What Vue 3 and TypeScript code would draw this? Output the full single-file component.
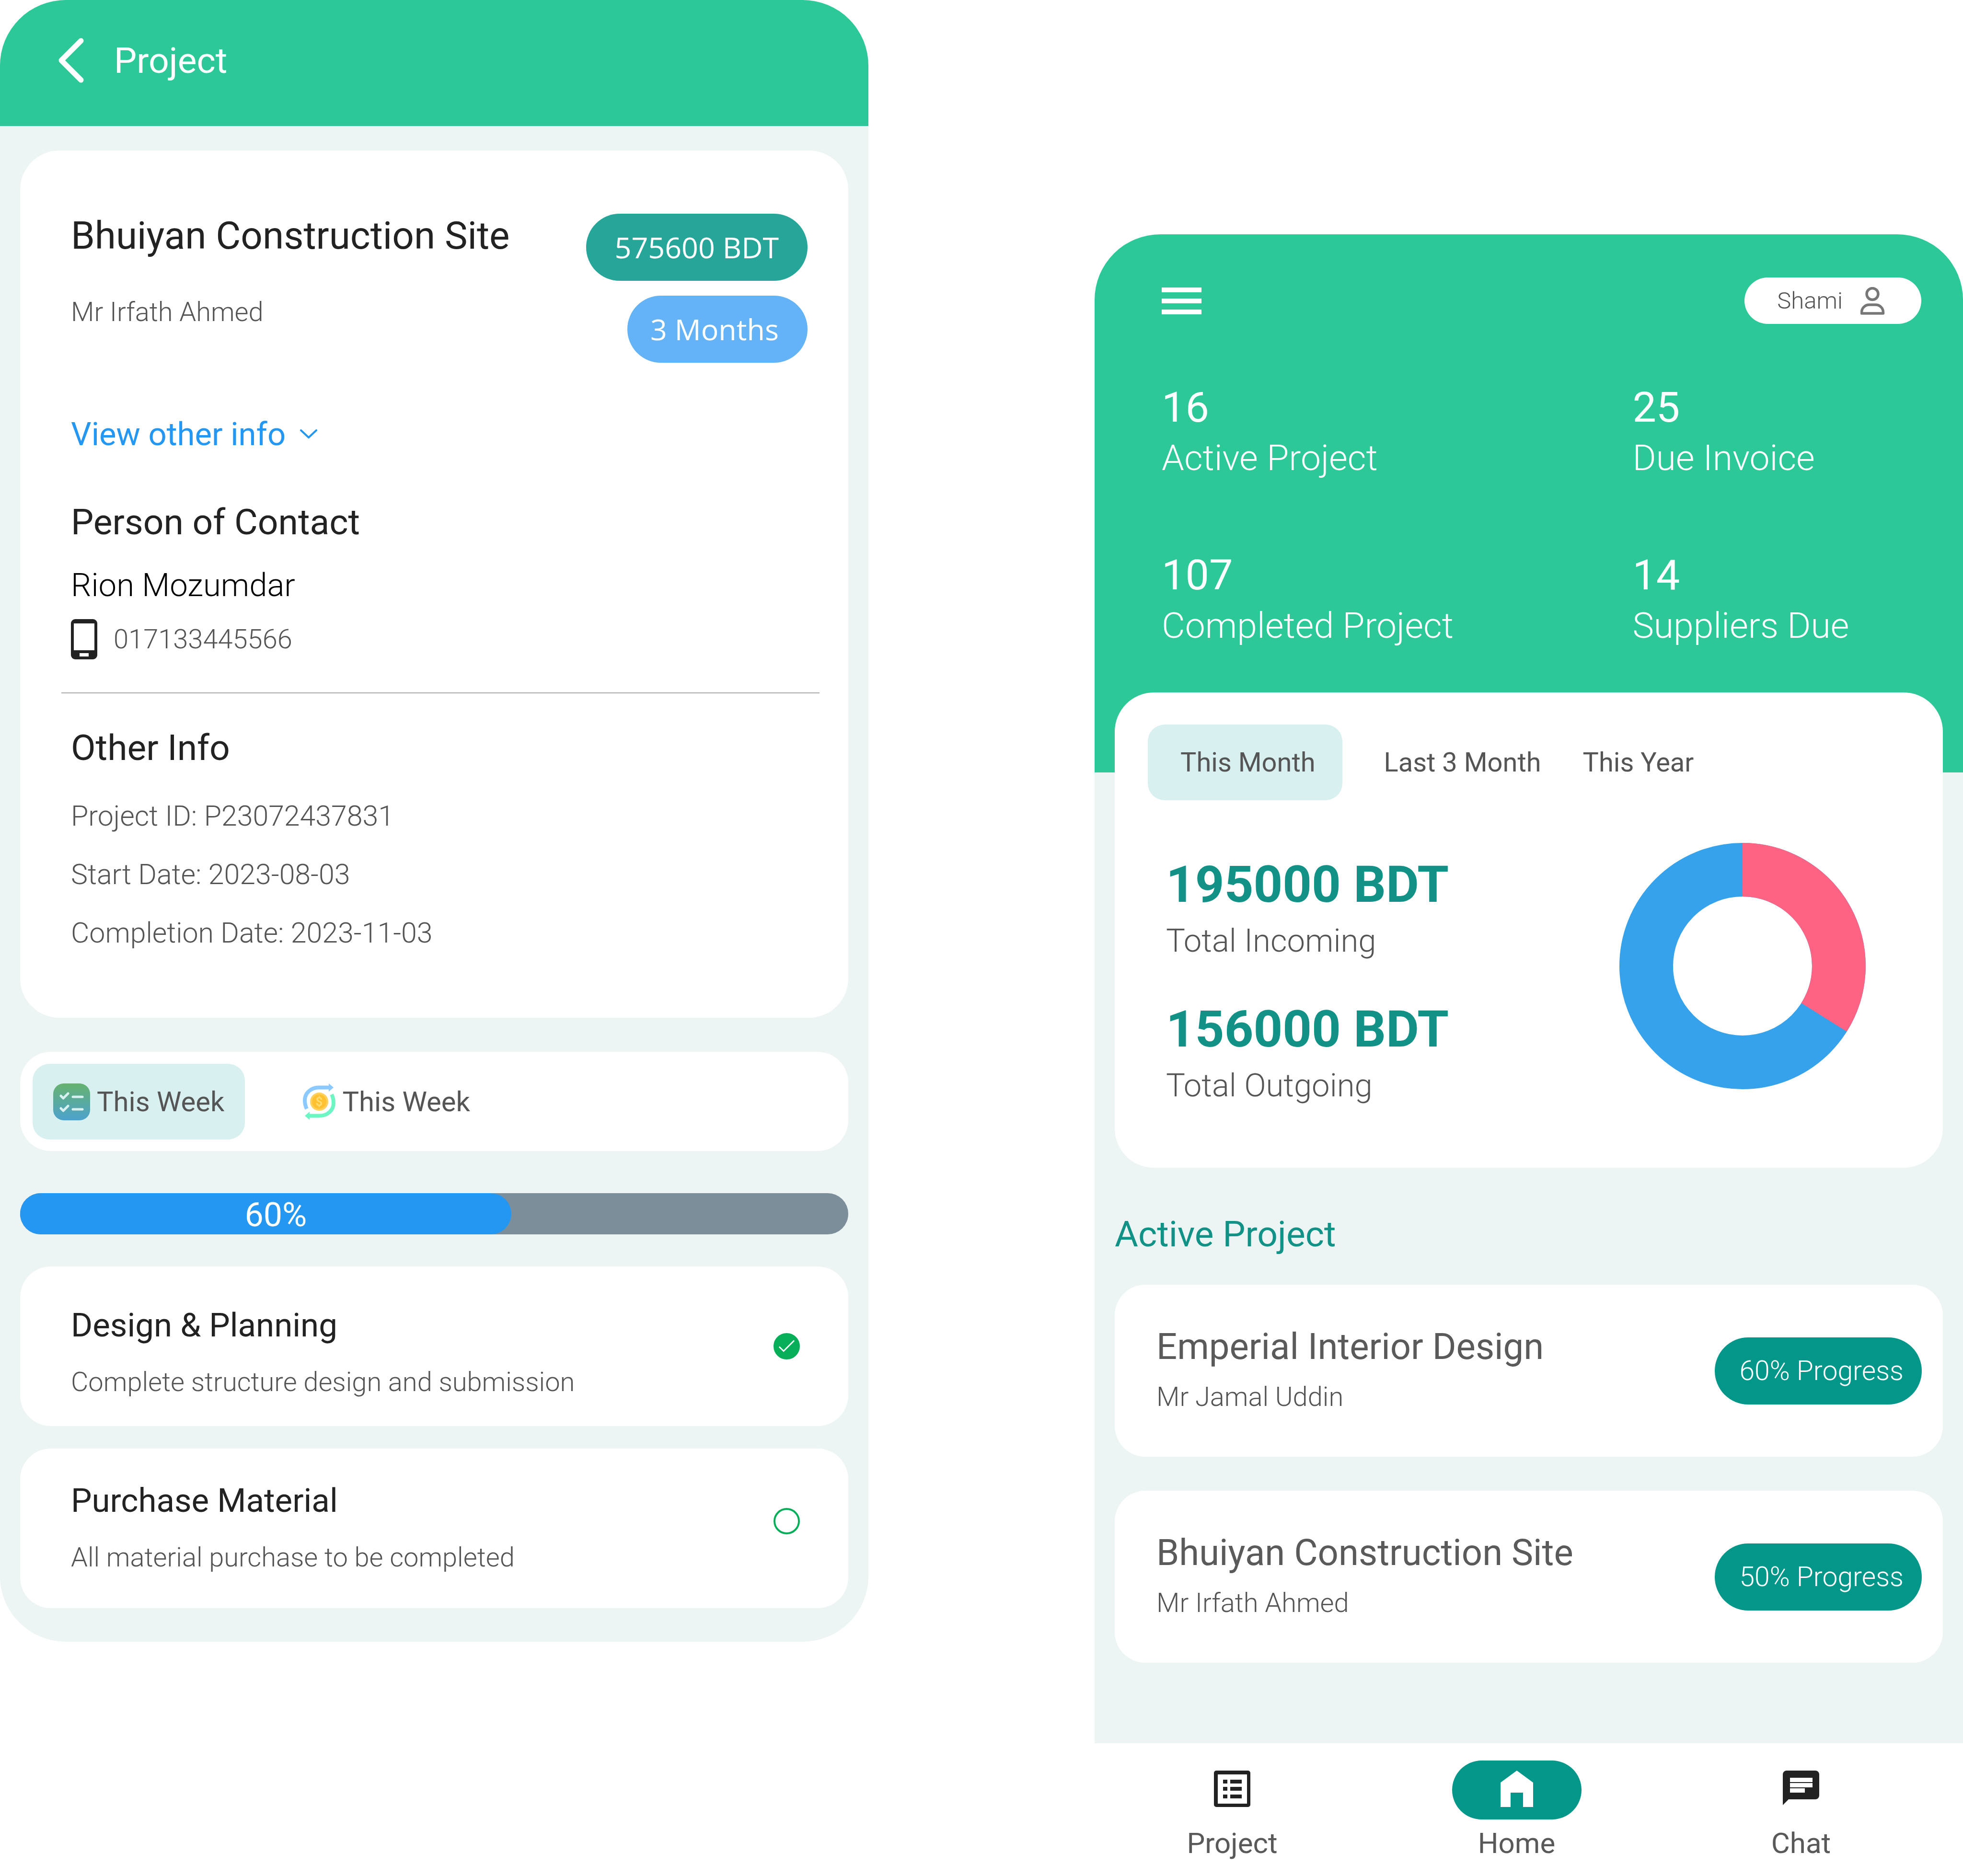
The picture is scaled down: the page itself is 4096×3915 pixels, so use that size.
<script setup lang="ts">
import { ref } from 'vue'

interface Task {
  title: string
  detail: string
  done: boolean
}

interface Project {
  name: string
  client: string
  progress: number
}

const info = ['Project ID: P23072437831', 'Start Date: 2023-08-03', 'Completion Date: 2023-11-03']

const tasks = ref<Task[]>([
  { title: 'Design & Planning', detail: 'Complete structure design and submission', done: true },
  { title: 'Purchase Material', detail: 'All material purchase to be completed', done: false },
])

const stats = [
  { value: 16, label: 'Active Project' },
  { value: 25, label: 'Due Invoice' },
  { value: 107, label: 'Completed Project' },
  { value: 14, label: 'Suppliers Due' },
]

const periods = ['This Month', 'Last 3 Month', 'This Year']
const period = ref(0)

const totals = [
  { amount: '195000 BDT', label: 'Total Incoming' },
  { amount: '156000 BDT', label: 'Total Outgoing' },
]

const projects: Project[] = [
  { name: 'Emperial Interior Design', client: 'Mr Jamal Uddin', progress: 60 },
  { name: 'Bhuiyan Construction Site', client: 'Mr Irfath Ahmed', progress: 50 },
]

const progress = { label: '60%', fill: 59.3 }
</script>

<template>
  <main class="board">
    <section class="phone detail">
      <header class="bar">
        <button class="plain back" aria-label="Back">
          <svg width="53" height="94" viewBox="0 0 53 94" fill="none" stroke="#fff" stroke-width="11" stroke-linecap="round" stroke-linejoin="round"><path d="M47 6 6 47l41 41" /></svg>
        </button>
        <h1 class="heading">Project</h1>
      </header>

      <article class="card summary">
        <div class="top">
          <div class="who">
            <h2 class="site">Bhuiyan Construction Site</h2>
            <p class="small">Mr Irfath Ahmed</p>
          </div>
          <div class="pills">
            <span class="pill budget">575600 BDT</span>
            <span class="pill term">3 Months</span>
          </div>
        </div>
        <button class="plain more">
          View other info
          <svg width="36" height="20" viewBox="0 0 36 20" fill="none" stroke="currentColor" stroke-width="4" stroke-linecap="round" stroke-linejoin="round"><path d="m2 2 16 15L34 2" /></svg>
        </button>
        <h3 class="heading contact">Person of Contact</h3>
        <p class="person">Rion Mozumdar</p>
        <a class="tel" href="tel:017133445566">
          <svg width="55" height="84" viewBox="0 0 55 84"><path fill="#222" fill-rule="evenodd" d="M9 0h37a9 9 0 0 1 9 9v66a9 9 0 0 1-9 9H9a9 9 0 0 1-9-9V9a9 9 0 0 1 9-9ZM6 9v56h43V9ZM18 71v7h19v-7Z" /></svg>
          017133445566
        </a>
        <hr />
        <h3 class="heading">Other Info</h3>
        <ul class="info">
          <li v-for="line in info" :key="line">{{ line }}</li>
        </ul>
      </article>

      <nav class="card weeks">
        <button class="tab active">
          <svg width="77" height="77" viewBox="0 0 77 77" fill="none">
            <defs><linearGradient id="leaf" x1="0" y1="0" x2="0" y2="1"><stop offset="0" stop-color="#67b26f" /><stop offset="1" stop-color="#4ca2cd" /></linearGradient></defs>
            <rect width="77" height="77" rx="22" fill="url(#leaf)" />
            <path d="m16 26 5 5 10-10M41 28h20M16 52l5 5 10-10M41 54h20" stroke="#d8f1f0" stroke-width="5" stroke-linecap="round" stroke-linejoin="round" />
          </svg>
          This Week
        </button>
        <button class="tab">
          <svg width="68" height="76" viewBox="0 0 68 76" fill="none">
            <g><path d="M8 53C5 47 4 41 4 35 4 20 17 8.500 33 8.500h22" stroke="#8bc9ff" stroke-width="8" /><path d="m54 0 10 8.500L54 17Z" fill="#8bc9ff" /></g>
            <g transform="rotate(180 34 38)"><path d="M8 53C5 47 4 41 4 35 4 20 17 8.500 33 8.500h22" stroke="#6df5c3" stroke-width="8" /><path d="m54 0 10 8.500L54 17Z" fill="#6df5c3" /></g>
            <circle cx="34" cy="38" r="19" fill="#ffd05b" />
            <circle cx="34" cy="38" r="15" fill="#ffc12f" />
            <text x="34" y="47" text-anchor="middle" font-size="26" font-weight="700" fill="#ffdc70">$</text>
          </svg>
          This Week
        </button>
      </nav>

      <div class="track" role="progressbar" aria-valuenow="60" aria-valuemin="0" aria-valuemax="100" aria-label="Project progress">
        <div class="fill" :style="{ width: progress.fill + '%' }">{{ progress.label }}</div>
      </div>

      <ul class="tasks">
        <li v-for="(task, i) in tasks" :key="task.title" class="card task">
          <div>
            <label :for="'task-' + i" class="task-title">{{ task.title }}</label>
            <p class="small">{{ task.detail }}</p>
          </div>
          <span class="tick">
            <input :id="'task-' + i" v-model="task.done" type="checkbox" />
            <svg v-if="task.done" width="55" height="55" viewBox="0 0 60 60" fill="none" stroke="#fff" stroke-width="3"><path d="m13 31 10 10 24-24" /></svg>
          </span>
        </li>
      </ul>
    </section>

    <section class="phone home">
      <header class="hero">
        <div class="tools">
          <button class="plain" aria-label="Menu">
            <svg width="83" height="56" viewBox="0 0 83 56" fill="#fff"><path d="M0 0h83v10H0zM0 23h83v10H0zM0 46h83v10H0z" /></svg>
          </button>
          <button class="user">
            Shami
            <svg width="51" height="58" viewBox="0 0 51 58" fill="none" stroke="#777" stroke-width="5.500"><circle cx="25" cy="14.500" r="12" /><path stroke-linejoin="round" d="M2.500 55v-2c0-9 7-16 16-16h13c9 0 16 7 16 16v2Z" /></svg>
          </button>
        </div>
        <dl class="stats">
          <div v-for="stat in stats" :key="stat.label" class="stat">
            <dd>{{ stat.value }}</dd>
            <dt>{{ stat.label }}</dt>
          </div>
        </dl>
      </header>

      <article class="card money">
        <div class="periods">
          <button v-for="(name, i) in periods" :key="name" class="tab" :class="{ active: i === period }" @click="period = i">{{ name }}</button>
        </div>
        <div class="flow">
          <dl class="totals">
            <div v-for="total in totals" :key="total.label" class="total">
              <dd>{{ total.amount }}</dd>
              <dt>{{ total.label }}</dt>
            </div>
          </dl>
          <svg class="donut" width="514" height="514" viewBox="-257 -257 514 514" role="img" aria-label="Incoming and outgoing share" fill="none" stroke-width="112">
            <circle r="201" stroke="#36a2eb" />
            <path d="M0-201A201 201 0 0 1 170 107" stroke="#ff6384" />
          </svg>
        </div>
      </article>

      <h2 class="heading active-title">Active Project</h2>
      <ul class="projects">
        <li v-for="project in projects" :key="project.name" class="card project">
          <div>
            <h3 class="heading">{{ project.name }}</h3>
            <p class="small">{{ project.client }}</p>
          </div>
          <span class="badge">{{ project.progress }}% Progress</span>
        </li>
      </ul>

      <nav class="dock">
        <a href="#project">
          <span class="slot"><svg width="76" height="76" viewBox="0 0 76 76" fill="#222"><path fill-rule="evenodd" d="M5 0h66a5 5 0 0 1 5 5v66a5 5 0 0 1-5 5H5a5 5 0 0 1-5-5V5a5 5 0 0 1 5-5Zm3 8v61h61V8Z" /><path d="M19 19h9v8h-9zM34 19h24v8H34zM19 34h9v8h-9zM34 34h24v8H34zM19 50h9v8h-9zM34 50h24v8H34z" /></svg></span>
          Project
        </a>
        <a href="#home">
          <span class="slot current"><svg width="68" height="76" viewBox="0 0 68 76" fill="#fff"><path d="M34 0 68 25v51H47V46H21v30H0V25Z" /></svg></span>
          Home
        </a>
        <a href="#chat">
          <span class="slot"><svg width="76" height="76" viewBox="0 0 76 76" fill="#222"><path fill-rule="evenodd" d="M8 0h60a8 8 0 0 1 8 8v44a8 8 0 0 1-8 8H12L0 72V8a8 8 0 0 1 8-8Zm7 15v9h47v-9Zm0 11v9h47v-9Zm0 11v9h31v-9Z" /></svg></span>
          Chat
        </a>
      </nav>
    </section>
  </main>
</template>

<style>
body {
  margin: 0;
  background: #fff;
}
</style>

<style scoped>
.board {
  display: grid;
  grid-template-columns: 1812fr 472fr 1812fr;
  align-items: start;
  font-family: Roboto, "Liberation Sans", sans-serif;
  font-size: 56px;
  font-weight: 400;
  color: #222;
}

h1, h2, h3, p, ul, dl, dd {
  margin: 0;
  padding: 0;
  font-weight: 400;
}

ul {
  list-style: none;
}

svg {
  display: block;
  flex: none;
}

button {
  border: 0;
  font: inherit;
  cursor: pointer;
}

a {
  color: inherit;
  text-decoration: none;
}

.plain {
  padding: 0;
  background: none;
}

.heading {
  font-size: 75px;
  line-height: 90px;
}

.small {
  font-size: 56px;
  line-height: 70px;
  font-weight: 300;
  color: #555;
}

.card {
  margin: 0 42px;
  background: #fff;
  border-radius: 64px;
}

.phone {
  background: #ecf5f4;
  border-radius: 137px 137px 0 0;
  overflow: hidden;
}

.detail {
  border-radius: 137px;
  padding-bottom: 70px;
}

.bar {
  display: flex;
  align-items: center;
  gap: 63px;
  box-sizing: border-box;
  height: 263px;
  padding: 0 122px 12px;
  background: #2cc897;
  color: #fff;
}

.summary {
  margin-top: 51px;
  padding: 132px 85px 116px 106px;
  border-radius: 82px;
}

.top {
  display: flex;
  justify-content: space-between;
}

.site {
  font-size: 80px;
  line-height: 92px;
  margin-bottom: 78px;
}

.pills {
  display: flex;
  flex-direction: column;
  align-items: flex-end;
  gap: 31px;
}

.pill {
  padding: 0 60px;
  border-radius: 70px;
  font-family: "Open Sans", "Noto Sans", sans-serif;
  font-size: 61px;
  line-height: 140px;
  color: #fff;
}

.budget {
  background: #25a699;
}

.term {
  padding-left: 48px;
  background: #64b3f6;
}

.more {
  display: flex;
  align-items: center;
  gap: 30px;
  margin-top: 109px;
  font-size: 67px;
  line-height: 80px;
  color: #2497f3;
}

.contact {
  margin-top: 98px;
}

.person {
  margin: 47px 0 31px;
  font-size: 67px;
  line-height: 80px;
  font-weight: 300;
  color: #000;
}

.tel {
  display: flex;
  align-items: center;
  gap: 34px;
  line-height: 84px;
  font-weight: 300;
  color: #555;
}

hr {
  height: 2px;
  margin: 69px -25px 68px -20px;
  border: 0;
  background: #aaa;
}

.info {
  margin-top: 37px;
  font-size: 59px;
  line-height: 122px;
  font-weight: 300;
  color: #555;
}

.weeks {
  display: flex;
  gap: 78px;
  margin-top: 71px;
  padding: 25px 26px 24px;
}

.tab {
  display: flex;
  align-items: center;
  gap: 14px;
  height: 158px;
  padding: 0 43px;
  border-radius: 35px;
  background: none;
  color: #555;
}

.weeks .tab {
  font-size: 58px;
}

.tab.active {
  background: #d8f1f0;
}

.track {
  margin: 88px 42px 67px;
  border-radius: 43px;
  background: #7d8e9b;
}

.fill {
  box-sizing: border-box;
  height: 86px;
  padding: 2px 0 0 42px;
  border-radius: 43px;
  background: #2497f3;
  color: #fff;
  font-size: 70px;
  line-height: 86px;
  text-align: center;
}

.tasks {
  display: grid;
  gap: 47px;
}

.task {
  display: flex;
  justify-content: space-between;
  padding: 83px 101px 57px 106px;
}

.task:last-child {
  padding-top: 69px;
  padding-bottom: 71px;
}

.task-title {
  display: block;
  margin-bottom: 43px;
  font-size: 69px;
  line-height: 80px;
}

.tick {
  display: grid;
  align-self: start;
  margin-top: 56px;
}

.task:last-child .tick {
  margin-top: 55px;
}

.tick > * {
  grid-area: 1 / 1;
}

.tick svg {
  z-index: 1;
  pointer-events: none;
}

.tick input {
  appearance: none;
  box-sizing: border-box;
  width: 55px;
  height: 55px;
  margin: 0;
  border: 4px solid #07ae59;
  border-radius: 50%;
}

.tick input:checked {
  background: #07ae59;
}

.home {
  grid-column: 3;
  margin-top: 489px;
}

.hero {
  padding: 90px 87px 262px 140px;
  background: #2cc897;
  color: #fff;
}

.tools {
  display: flex;
  justify-content: space-between;
  align-items: center;
}

.user {
  display: flex;
  align-items: center;
  gap: 37px;
  height: 97px;
  padding: 0 76px 0 68px;
  border-radius: 49px;
  background: #fff;
  color: #555;
  font-size: 49px;
  font-weight: 300;
}

.stats {
  display: grid;
  grid-template-columns: 983fr 603fr;
  row-gap: 150px;
  margin-top: 124px;
}

.stat dd {
  margin-bottom: 10px;
  font-size: 88px;
  line-height: 100px;
}

.stat dt {
  font-size: 75px;
  line-height: 90px;
  font-weight: 300;
}

.money {
  position: relative;
  margin-top: -167px;
  padding: 67px 69px 132px;
  border-radius: 82px;
}

.periods {
  display: flex;
  gap: 87px;
}

.periods .tab {
  padding: 0;
}

.periods .tab.active {
  padding: 0 56px 0 68px;
}

.flow {
  display: flex;
  justify-content: space-between;
  align-items: flex-start;
  margin: 89px 92px 0 38px;
}

.totals {
  display: grid;
  gap: 90px;
  padding-top: 32px;
}

.total dd {
  margin-bottom: 22px;
  font-size: 106px;
  line-height: 110px;
  font-weight: 700;
  color: #129286;
}

.total dt {
  font-size: 67px;
  line-height: 80px;
  font-weight: 300;
  color: #555;
}

.active-title {
  margin: 93px 42px 61px;
  color: #129286;
}

.projects {
  display: grid;
  gap: 71px;
}

.project {
  display: flex;
  justify-content: space-between;
  align-items: center;
  padding: 84px 44px 90px 87px;
}

.project .heading {
  margin-bottom: 25px;
  font-size: 76px;
  color: #5a5a5a;
}

.badge {
  margin: -24px 0 -30px;
  padding: 0 38px 0 51px;
  border-radius: 70px;
  background: #029788;
  color: #fff;
  font-size: 57px;
  line-height: 140px;
  font-weight: 300;
}

.dock {
  display: flex;
  justify-content: space-between;
  margin-top: 168px;
  padding: 36px 203px 36px 152px;
  background: #fff;
}

.dock a {
  display: grid;
  gap: 18px;
  width: 270px;
  text-align: center;
  font-size: 60px;
  line-height: 64px;
  color: #595959;
}

.slot {
  display: flex;
  justify-content: center;
  align-items: center;
  box-sizing: border-box;
  height: 123px;
  padding-bottom: 6px;
  border-radius: 62px;
}

.slot.current {
  background: #029788;
}
</style>
